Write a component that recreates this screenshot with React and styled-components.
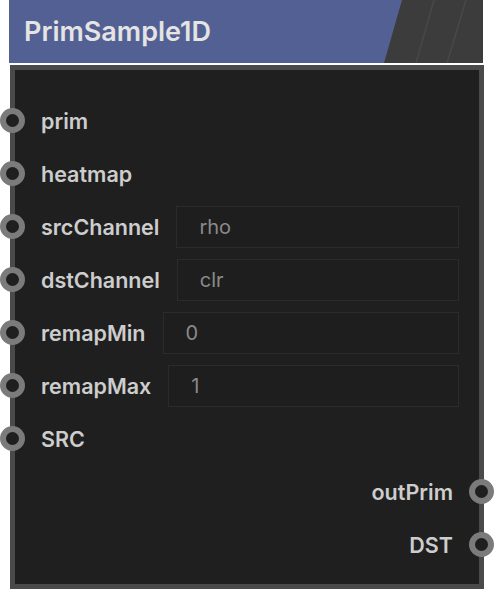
import React from 'react'
import styled, { createGlobalStyle } from 'styled-components'

const Global = createGlobalStyle`
  html, body {
    margin: 0;
    padding: 0;
    background: #ffffff;
  }
  body {
    font-family: Inter, "Noto Sans", sans-serif;
  }
`

const Node = styled.div`
  display: flex;
  flex-direction: column;
  gap: 2px;
  width: 475px;
`

const Header = styled.div`
  position: relative;
  display: flex;
  margin-left: 9px;
  width: 474px;
  height: 63px;
  background: #3c3c3c;
  overflow: hidden;
`

const TitleBar = styled.div`
  display: flex;
  align-items: center;
  width: 393px;
  padding-left: 15px;
  box-sizing: border-box;
  background: #536093;
  clip-path: polygon(0 0, 393px 0, 375px 100%, 0 100%);
  color: #e4e4e4;
  font-size: 27px;
  font-weight: 600;
`

const Stripes = styled.svg`
  position: absolute;
  top: 0;
  left: 0;
  pointer-events: none;
`

const Body = styled.div`
  margin-left: 10px;
  width: 474px;
  box-sizing: border-box;
  border: 5px solid #4a4a4a;
  background: #1f1f1f;
  padding: 24px 0 13px;
  display: flex;
  flex-direction: column;
`

const Row = styled.div`
  position: relative;
  display: flex;
  align-items: center;
  justify-content: ${p => (p.$out ? 'flex-end' : 'flex-start')};
  height: 53px;
  padding: 0 26px;
  gap: 17px;
`

const Socket = styled.span`
  position: absolute;
  top: 50%;
  ${p => (p.$out ? 'right: -15px;' : 'left: -15px;')}
  width: 25px;
  height: 25px;
  margin-top: -12.5px;
  box-sizing: border-box;
  border-radius: 50%;
  border: 6.5px solid #7b7b7b;
  background: #1f1f1f;
`

const Label = styled.span`
  color: #cdcdcd;
  font-size: 21.5px;
  font-weight: 600;
  white-space: nowrap;
`

const Field = styled.div`
  flex: 1;
  display: flex;
  align-items: center;
  height: 42px;
  margin-right: -6px;
  padding-left: 22px;
  box-sizing: border-box;
  border: 1px solid #2b2b2b;
  background: #1e1e1e;
  color: #8a8a8a;
  font-size: 20px;
  font-weight: 400;
`

const inputs = [
  { name: 'prim' },
  { name: 'heatmap' },
  { name: 'srcChannel', value: 'rho' },
  { name: 'dstChannel', value: 'clr' },
  { name: 'remapMin', value: '0' },
  { name: 'remapMax', value: '1' },
  { name: 'SRC' },
]

const outputs = ['outPrim', 'DST']

export default function App() {
  return (
    <>
      <Global />
      <Node>
        <Header>
          <TitleBar>PrimSample1D</TitleBar>
          <Stripes width="474" height="63" viewBox="0 0 474 63">
            <line x1="425" y1="0" x2="407" y2="63" stroke="#484848" strokeWidth="1.5" />
            <line x1="457" y1="0" x2="438" y2="63" stroke="#484848" strokeWidth="1.5" />
          </Stripes>
        </Header>
        <Body>
          {inputs.map(i => (
            <Row key={i.name}>
              <Socket />
              <Label>{i.name}</Label>
              {i.value !== undefined && <Field>{i.value}</Field>}
            </Row>
          ))}
          {outputs.map(o => (
            <Row key={o} $out>
              <Label>{o}</Label>
              <Socket $out />
            </Row>
          ))}
        </Body>
      </Node>
    </>
  )
}
